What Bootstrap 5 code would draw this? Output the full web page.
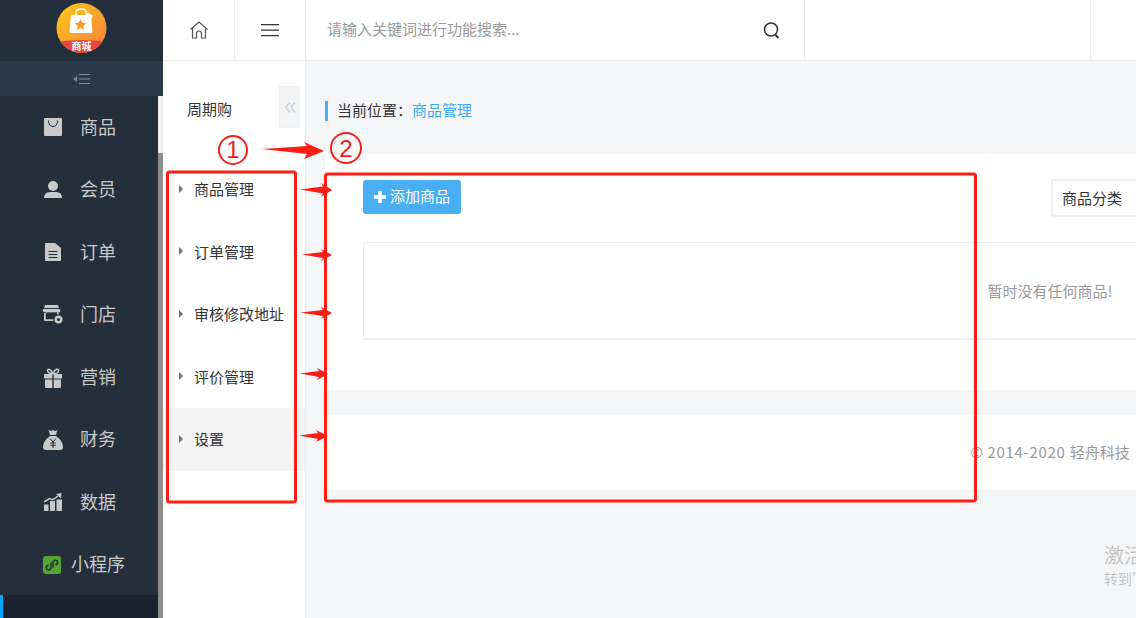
<!DOCTYPE html>
<html lang="zh">
<head>
<meta charset="utf-8">
<title>商品管理</title>
<link href="https://cdn.jsdelivr.net/npm/bootstrap@5.3.0/dist/css/bootstrap.min.css" rel="stylesheet">
<style>
html,body{height:100%;overflow:hidden}
body{font-family:"Noto Sans CJK SC","Liberation Sans",sans-serif;font-size:15px;color:#333;background:#f5f6f8}
.shell{width:1136px;height:618px;overflow:hidden;position:relative}
.side-main{width:163px;background:#242f3c;flex:none}
.logo-box{height:61px}
.fold-bar{height:35px;background:#293a4c}
.side-body{height:522px;overflow:hidden}
.side-list{width:158px}
.side-item{height:62.5px;color:#c9c9c9;font-size:18px;padding:0 0 2px 44px;gap:18px}
.side-item svg{width:18px;height:18px;flex:none;margin-top:2px}
.side-item.tight{padding-left:43px;gap:10px}
.side-item.on{background:#1b2230;border-left:3px solid #00a9ff;padding:21px 0 0 41px;margin-top:-1px;align-items:flex-start;height:80px}
.side-item .ico-store{width:21px;height:19px;margin-left:-2px;margin-right:-1px}
.side-item .ico-gift{height:20px;margin-top:3px}
.side-item .ico-money{width:20px;height:20px;margin-left:-1px;margin-right:-1px}
.scroll-track{width:5px;background:#f1f1f1}
.scroll-thumb{height:465px;margin-top:57px;background:#8e8e8e}
.work{width:973px;flex:none}
.topbar{height:61px;background:#fff;border-bottom:1px solid #eceef0}
.top-cell{height:60px;border-right:1px solid #eeeeee;flex:none}
.top-home{width:72px}
.top-menu{width:71px}
.top-search{width:499px;padding:0 24px 0 22px;color:#999}
.search-hint{margin:-2px 0 0 -1px}
.top-blank{width:286px}
.below{height:557px}
.side-sub{width:143px;background:#fff;border-right:1px solid #eceef0;flex:none;position:relative}
.sub-title{padding:37px 0 0 24px;height:97px;font-size:15px;color:#333}
.sub-fold{position:absolute;left:116px;top:25px;width:21px;height:42px;background:#f3f4f6;border:1px solid #eef0f2;border-right:0}
.sub-item{height:62.5px;padding-left:16px;color:#333;gap:11px}
.sub-item.now{background:#f4f4f4}
.caret-r{width:0;height:0;border-left:4px solid #6b7280;border-top:4px solid transparent;border-bottom:4px solid transparent;margin-top:-1px}
.content-wrap{padding-left:19px;overflow:hidden;flex:none;width:830px}
.crumb{margin-top:40px;height:20px;border-left:3px solid #4aaef5;padding-left:9px;line-height:18px}
.crumb-link{color:#3fa9f5}
.panel-w{width:1450px;background:#fff}
.panel-one{margin-top:33px;height:236px;padding:26px 38px 0}
.btn-add{width:98px;height:34px;padding:0 0 2px;background:#4aaef5;border:0;color:#fff;font-size:15px;border-radius:3px;gap:4px}
.btn-add svg{margin-top:2px}
.btn-add:hover{background:#4aaef5;color:#fff}
.kind-select{margin-left:590px;width:200px;height:38px;border:2px solid #f0f0f0;border-radius:3px;padding-left:9px;color:#333;margin-top:-1px;background:#fff}
.empty-box{margin-top:25px;height:98px;padding-top:2px;border:1px solid #eee;border-bottom:2px solid #eee;border-radius:3px;color:#999}
.panel-foot{margin-top:25px;height:75px;color:#999}
.foot-latin{letter-spacing:.7px}
.overlay{position:absolute;left:0;top:0;width:1136px;height:618px;pointer-events:none}
.winmark{position:absolute;left:1104px;top:542px;color:#c4c4c4;white-space:nowrap;pointer-events:none}
.winmark-a{font-size:20px;line-height:26px}
.winmark-b{font-size:14px;line-height:20px}
.digit{font-family:"Liberation Sans",sans-serif;font-size:24px;fill:#f01c1c}
.logo-text{font-family:"Noto Sans CJK SC",sans-serif;font-size:10px;font-weight:700;fill:#fff}
</style>
</head>
<body>
<div class="shell d-flex">
  <aside class="side-main d-flex flex-column">
    <div class="logo-box d-flex justify-content-center">
      <svg width="52" height="54" viewBox="0 0 52 54">
        <defs>
          <linearGradient id="lg" x1="0" y1="0" x2="1" y2="1"><stop offset="0" stop-color="#fdc918"/><stop offset="1" stop-color="#f47f3d"/></linearGradient>
          <clipPath id="lc"><circle cx="25.500" cy="28" r="25"/></clipPath>
        </defs>
        <circle cx="25.500" cy="28" r="25" fill="url(#lg)"/>
        <path d="M0 42 Q25.500 38 51 42 V54 H0Z" fill="#ea4340" clip-path="url(#lc)"/>
        <path d="M15 15H35L36.500 32Q36.500 33 35 33H15Q13.500 33 13.500 32Z" fill="#fff"/>
        <path d="M20 16V12.500Q20 9 25 9T30 12.500V16" fill="none" stroke="#fff" stroke-width="1.300"/>
        <path d="M31 12.500l6 3-1.500 3-5.500-3z" fill="#fff"/>
        <path d="M24.500 19l1.800 3.800 4 .5-3 2.800.8 4-3.600-2-3.600 2 .8-4-3-2.800 4-.5z" fill="#f79a2e"/>
        <text class="logo-text" x="25.500" y="50" text-anchor="middle">商城</text>
      </svg>
    </div>
    <div class="fold-bar d-flex align-items-center justify-content-center">
      <svg width="18" height="12" viewBox="0 0 18 12" fill="#7f8b98"><path d="M0 6l4-3v6z"/><path d="M6 1h11v1H6zM6 5.500h11v1H6zM6 10h11v1H6z"/></svg>
    </div>
    <div class="side-body d-flex">
      <nav class="side-list">
        <a class="side-item d-flex align-items-center text-decoration-none">
          <svg viewBox="0 0 18 18"><path d="M1 0h16a1 1 0 0 1 1 1v16a1 1 0 0 1-1 1H1a1 1 0 0 1-1-1V1a1 1 0 0 1 1-1z" fill="#c9c9c9"/><path d="M4.500 2.500q0 6 4.500 6t4.500-6" fill="none" stroke="#242f3c" stroke-width="1"/></svg>商品</a>
        <a class="side-item d-flex align-items-center text-decoration-none">
          <svg viewBox="0 0 18 18" fill="#c9c9c9"><circle cx="9" cy="5" r="5"/><path d="M0 17q0-6 6-6h6q6 0 6 6z"/></svg>会员</a>
        <a class="side-item d-flex align-items-center text-decoration-none">
          <svg viewBox="0 0 18 18" fill="#c9c9c9"><path fill-rule="evenodd" d="M2 0h9l6 5v12a1 1 0 0 1-1 1H2a1 1 0 0 1-1-1V1a1 1 0 0 1 1-1zM4.500 8v1h9V8zm0 3v1h9v-1zm0 3v1h9v-1z"/></svg>订单</a>
        <a class="side-item d-flex align-items-center text-decoration-none">
          <svg class="ico-store" viewBox="0 0 21 19" fill="#c9c9c9"><path d="M3 0h13l1 3H2z"/><path d="M1 4h17q1 3-1 3.500-2 .5-3-.5-2 1.200-4 0-2 1.200-4 0-1 1-2.500.5Q0 7 1 4z"/><path d="M2 8h1.800v6.200h7.500V16H3a1 1 0 0 1-1-1zM15 8h1.800v1.500H15z"/><circle cx="16.500" cy="14.500" r="2.800" fill="none" stroke="#c9c9c9" stroke-width="2.400"/></svg>门店</a>
        <a class="side-item d-flex align-items-center text-decoration-none">
          <svg class="ico-gift" viewBox="0 0 18 20" fill="#c9c9c9"><path d="M0 6h8.300v4.500H0zM9.700 6H18v4.500H9.700zM1 11.500h7.300V20H2a1 1 0 0 1-1-1zM9.700 11.500H17V19a1 1 0 0 1-1 1H9.700z"/><path d="M9 5.500C7 .5 3 .5 3.500 3S7 5.500 9 5.500C11 5.500 14 6 14.500 3S11 .5 9 5.500z" fill="none" stroke="#c9c9c9" stroke-width="1.500"/></svg>营销</a>
        <a class="side-item d-flex align-items-center text-decoration-none">
          <svg class="ico-money" viewBox="0 0 20 20" fill="#c9c9c9"><path d="M5.500 0l2.500 1 2-1 2 1 2.500-1L13 5H7z"/><path d="M7 6h6q7 5 7 11 0 3-3 3H3q-3 0-3-3 0-6 7-11z"/><path d="M7 8.500l3 3.500 3-3.500M10 12v6M7.300 13h5.400M7.300 15.300h5.400" fill="none" stroke="#242f3c" stroke-width="1"/></svg>财务</a>
        <a class="side-item d-flex align-items-center text-decoration-none">
          <svg viewBox="0 0 18 18" fill="#c9c9c9"><path d="M0 11.500h4.500V18H0zM6 8h5v10H6zM12.500 6.500H18V18h-5.500z"/><path d="M0 9L5.500 5.500l3.500 1.200L14 3" fill="none" stroke="#c9c9c9" stroke-width="1.500"/><path d="M12 1l5.500-1-.5 5.500z"/></svg>数据</a>
        <a class="side-item tight d-flex align-items-center text-decoration-none">
          <svg viewBox="0 0 18 18"><rect width="18" height="18" rx="3" fill="#55a42f"/><path d="M8 6.500v5a2.300 2.300 0 1 1-2.300-2.300M10 11.500v-5a2.300 2.300 0 1 1 2.300 2.300" fill="none" stroke="#242f3c" stroke-width="1.500"/></svg>小程序</a>
        <a class="side-item on d-flex text-decoration-none">
          <svg viewBox="0 0 18 18" fill="#c9a36b"><rect width="8" height="8" x="4" y="0"/></svg>应用</a>
      </nav>
      <div class="scroll-track"><div class="scroll-thumb"></div></div>
    </div>
  </aside>
  <div class="work d-flex flex-column">
    <header class="topbar d-flex">
      <div class="top-cell top-home d-flex align-items-center justify-content-center">
        <svg width="18" height="18" viewBox="0 0 18 18" fill="none" stroke="#555" stroke-width="1.200"><path d="M.5 8.500L9 1l8.500 7.500M2.500 7.500V17h4v-4.500a2.500 2.500 0 0 1 5 0V17h4V7.500"/></svg>
      </div>
      <div class="top-cell top-menu d-flex align-items-center justify-content-center">
        <svg width="18" height="14" viewBox="0 0 18 14" fill="#333"><path d="M0 1h18v1.200H0zM0 6.500h18v1.200H0zM0 12h18v1.200H0z"/></svg>
      </div>
      <div class="top-cell top-search d-flex align-items-center justify-content-between">
        <span class="search-hint">请输入关键词进行功能搜索...</span>
        <svg width="17" height="18" viewBox="0 0 17 18" fill="none" stroke="#333" stroke-width="1.500"><circle cx="8" cy="8.500" r="6.500"/><path d="M12.500 14l3 3" stroke-width="2"/></svg>
      </div>
      <div class="top-cell top-blank"></div>
    </header>
    <div class="below d-flex">
      <aside class="side-sub">
        <div class="sub-title">周期购</div>
        <div class="sub-fold d-flex align-items-center justify-content-center">
          <svg width="11" height="11" viewBox="0 0 11 11" fill="none" stroke="#c5d0de" stroke-width="1.200"><path d="M5 .5L.8 5.500 5 10.500M10 .5L5.800 5.500l4.200 5"/></svg>
        </div>
        <div class="sub-item d-flex align-items-center"><i class="caret-r"></i>商品管理</div>
        <div class="sub-item d-flex align-items-center"><i class="caret-r"></i>订单管理</div>
        <div class="sub-item d-flex align-items-center"><i class="caret-r"></i>审核修改地址</div>
        <div class="sub-item d-flex align-items-center"><i class="caret-r"></i>评价管理</div>
        <div class="sub-item now d-flex align-items-center"><i class="caret-r"></i>设置</div>
      </aside>
      <main class="content-wrap">
        <div class="crumb">当前位置：<a class="crumb-link text-decoration-none">商品管理</a></div>
        <section class="panel-w panel-one">
          <div class="d-flex align-items-start">
            <button type="button" class="btn btn-add d-flex align-items-center justify-content-center">
              <svg width="12" height="12" viewBox="0 0 12 12" fill="#fff"><path d="M4.200 0h3.600v4.200H12v3.600H7.800V12H4.200V7.800H0V4.200h4.200z"/></svg>添加商品</button>
            <div class="kind-select d-flex align-items-center">商品分类</div>
          </div>
          <div class="empty-box d-flex align-items-center justify-content-center">暂时没有任何商品!</div>
        </section>
        <footer class="panel-w panel-foot d-flex align-items-center justify-content-center"><span><span class="foot-latin">© 2014-2020 </span>轻舟科技</span></footer>
      </main>
    </div>
  </div>
  <div class="winmark">
    <div class="winmark-a">激活 Windows</div>
    <div class="winmark-b">转到"设置"以激活 Windows。</div>
  </div>
  <svg class="overlay" viewBox="0 0 1136 618">
    <g fill="none" stroke="#ff1e14" stroke-width="3" stroke-linejoin="round">
      <rect x="167.500" y="172" width="128" height="330" rx="2"/>
      <rect x="325.500" y="174" width="650" height="327" rx="2"/>
    </g>
    <g fill="none" stroke="#f5201a" stroke-width="2">
      <circle cx="233" cy="150" r="14"/>
      <circle cx="346" cy="148" r="15"/>
    </g>
    <text class="digit" x="233" y="158" text-anchor="middle">1</text>
    <text class="digit" x="346" y="157" text-anchor="middle">2</text>
    <g fill="#ff1e14">
      <path d="M262 149L307 146 304 142 324 151 304 159 307 154Z"/>
      <path d="M300 189.500L323 186.500 321 183 332 190 321 197 323 193.500Z"/>
      <path d="M302 254.500L323 252 321 249 332 255 321 261 323 258Z"/>
      <path d="M300 312.500L323 310 321 307 332 313 321 319 323 316Z"/>
      <path d="M300 373.500L319 371 317 368 328 374 317 380 319 377Z"/>
      <path d="M299 435.500L318 433 316 430 328 436 316 442 318 439Z"/>
    </g>
  </svg>
</div>
<script src="https://cdn.jsdelivr.net/npm/bootstrap@5.3.0/dist/js/bootstrap.bundle.min.js"></script>
</body>
</html>
